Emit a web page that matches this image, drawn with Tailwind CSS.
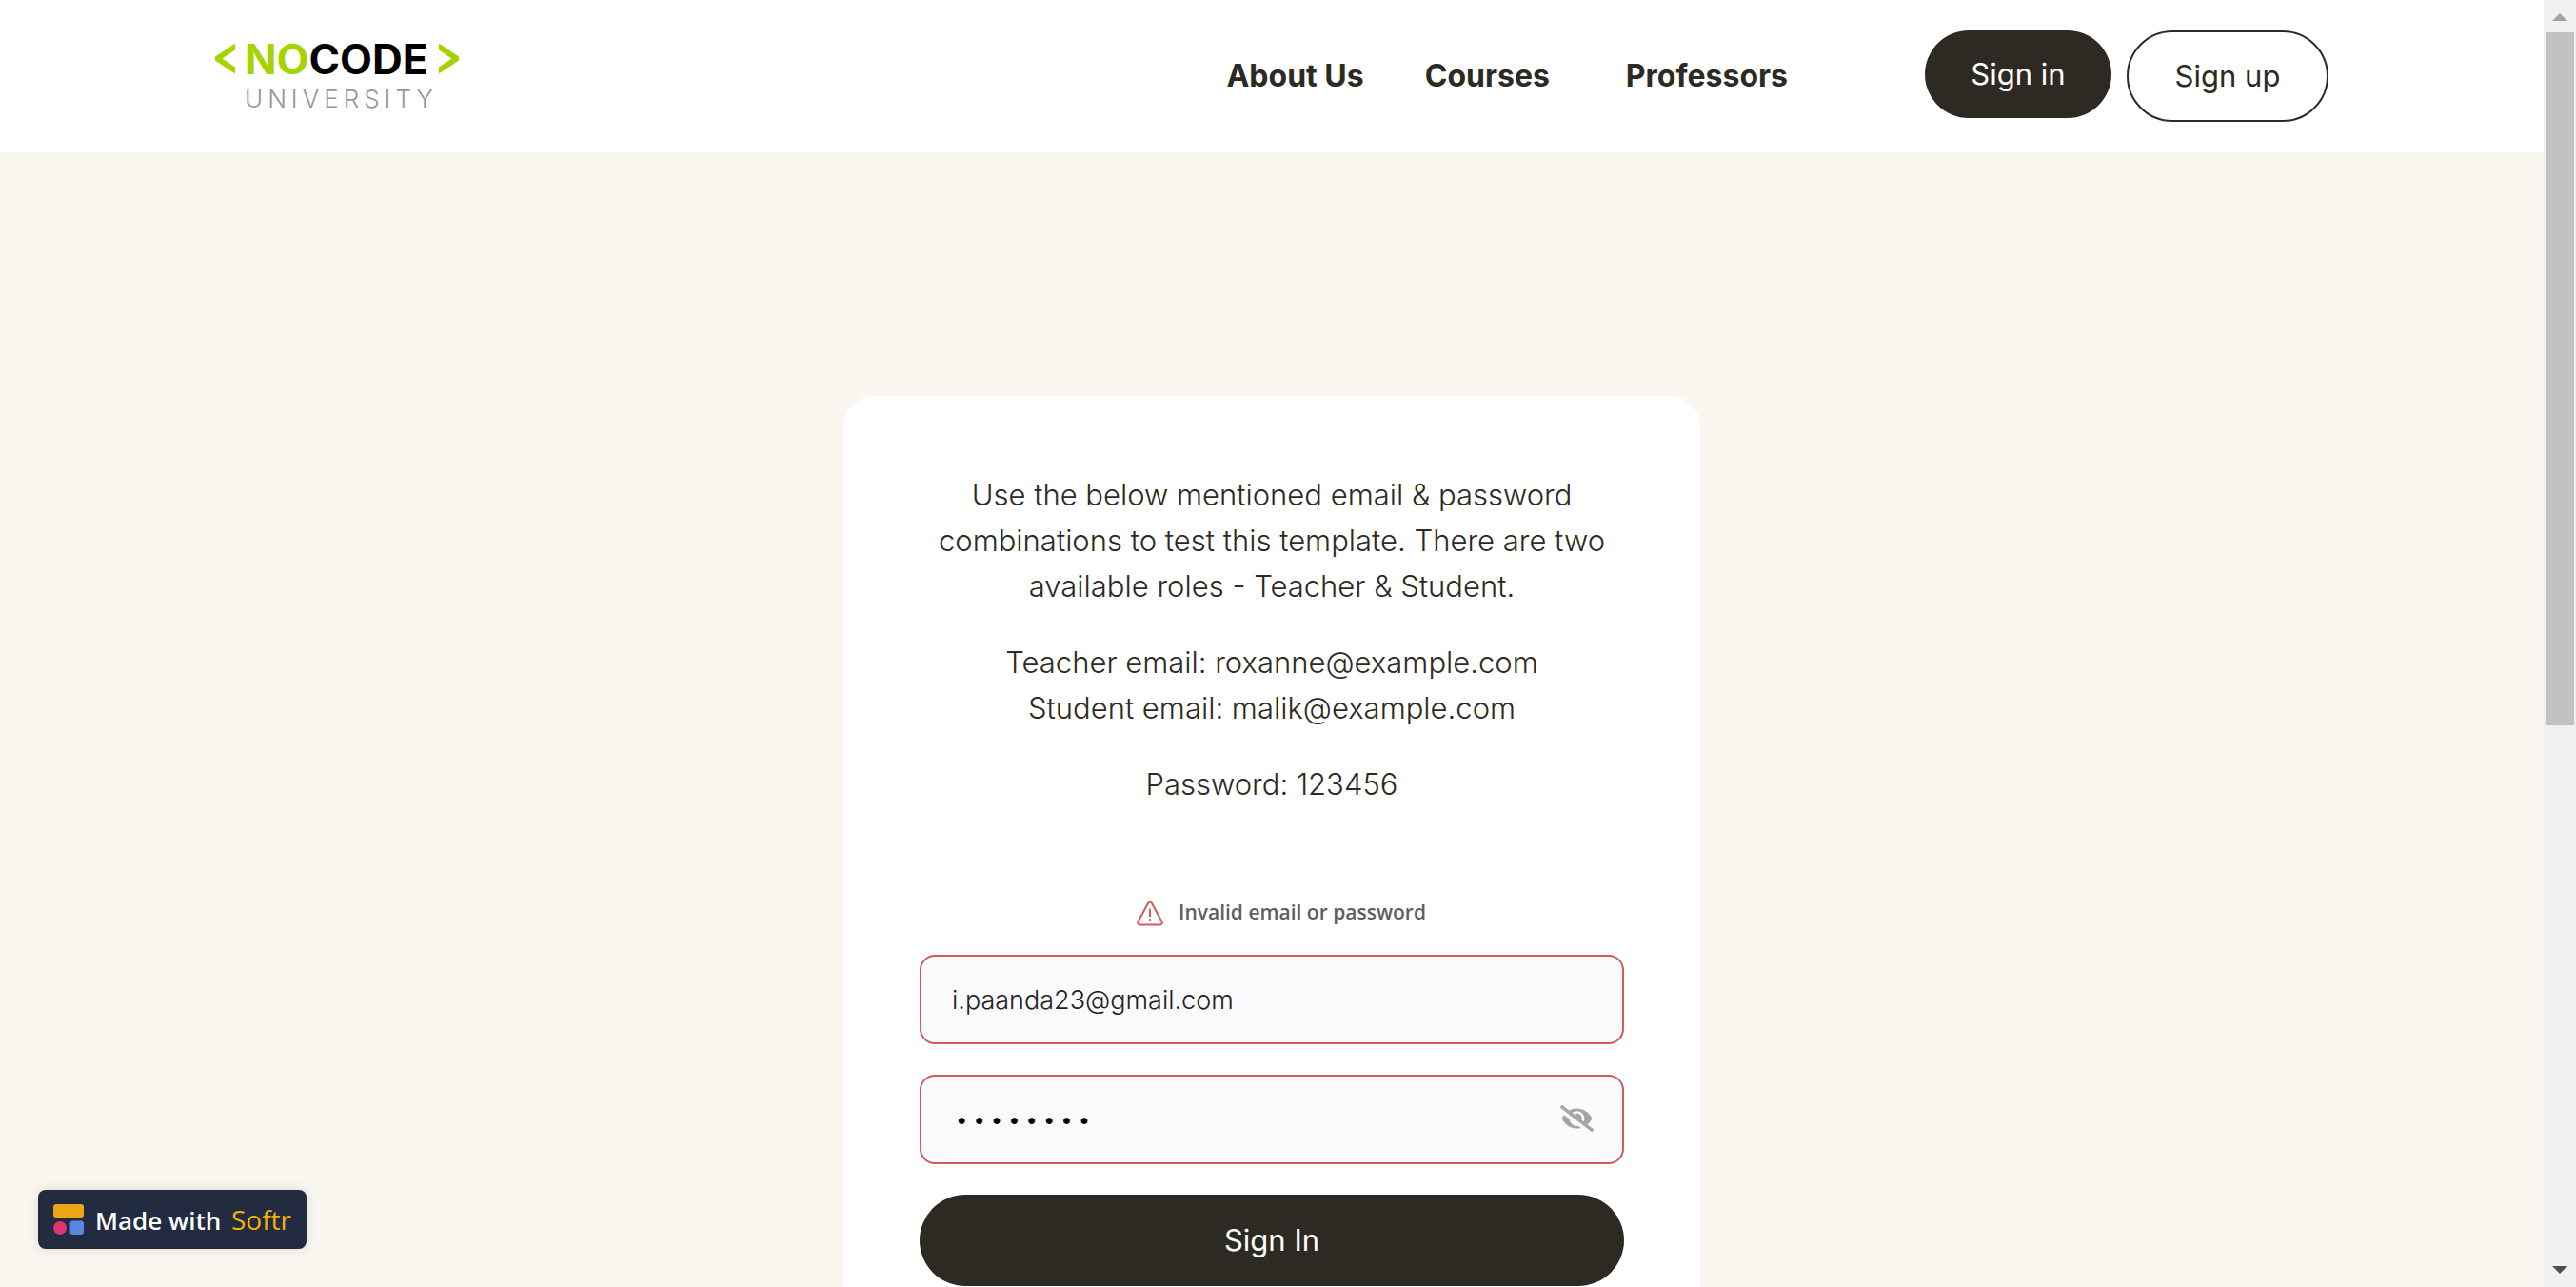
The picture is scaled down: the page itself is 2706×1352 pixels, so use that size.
<!DOCTYPE html>
<html lang="en">
<head>
<meta charset="utf-8">
<meta name="viewport" content="width=device-width, initial-scale=1">
<title>Sign in - NoCode University</title>
<script src="https://cdn.jsdelivr.net/npm/@tailwindcss/browser@4"></script>
</head>
<body class="flex h-screen overflow-hidden bg-[#f9f6ef] font-['Inter',sans-serif] text-[#2d2a23]">
  <div class="relative min-w-0 flex-1 overflow-hidden">
    <header class="bg-white">
      <div class="mx-auto flex h-40 max-w-[2220px] items-center justify-between">
        <a href="#" class="flex items-start" aria-label="NoCode University">
          <svg class="mt-1 h-9 w-[22px] fill-[#a5d300]" viewBox="0 0 22 36" aria-hidden="true"><path d="M21 1.5 0 15.5v4l21 14v-7L7.5 17.5 21 8.5z"/></svg>
          <span class="mx-2 flex w-[196px] flex-col gap-1 pl-px">
            <span class="text-[44px] leading-11 font-bold text-black"><span class="text-[#a5d300]">NO</span>CODE</span>
            <span class="text-[26px] leading-8 font-light tracking-[5px] text-[#98968f]">UNIVERSITY</span>
          </span>
          <svg class="mt-1 h-9 w-[22px] fill-[#a5d300]" viewBox="0 0 22 36" aria-hidden="true"><path d="M1 1.5 22 15.5v4L1 33.5v-7l13.5-9L1 8.5z"/></svg>
        </a>
        <div class="flex items-center">
          <nav class="mr-36 flex items-center text-[32px] leading-12 font-bold">
            <a href="#" class="mr-16">About Us</a>
            <a href="#" class="mr-20">Courses</a>
            <a href="#">Professors</a>
          </nav>
          <div class="flex items-start gap-4 text-[31px] leading-12">
            <button type="button" class="h-[92px] w-49 rounded-full bg-[#2d2a23] text-white">Sign in</button>
            <button type="button" class="h-24 w-53 rounded-full border-2 border-[#2d2a23] bg-white">Sign up</button>
          </div>
        </div>
      </div>
    </header>

    <main class="px-8 pt-64 pb-64">
      <section class="mx-auto max-w-[900px] rounded-[32px] bg-white p-20">
        <div class="flex flex-col gap-8 text-center text-[31px] leading-12 font-light">
          <p>Use the below mentioned email &amp; password<br>combinations to test this template. There are two<br>available roles - Teacher &amp; Student.</p>
          <p>Teacher email: roxanne@example.com<br>Student email: malik@example.com</p>
          <p>Password: 123456</p>
        </div>
        <form class="mt-23 flex flex-col">
          <p class="flex items-center justify-center gap-4 pl-5 font-['Open_Sans',sans-serif] text-[21px] leading-9 font-semibold text-[#5e5e62]" role="alert">
            <svg class="mt-1 h-7 w-7" viewBox="0 0 28 28" fill="none" stroke="#d05c5e" stroke-width="2" stroke-linecap="round" stroke-linejoin="round" aria-hidden="true"><path d="M12.2 2.6 1.4 22.6a2 2 0 0 0 1.8 2.9h21.6a2 2 0 0 0 1.8-2.9L15.8 2.6a2 2 0 0 0-3.6 0z"/><path d="M14 9.5v7M14 20v.3"/></svg>
            Invalid email or password
          </p>
          <input type="email" aria-label="Email" value="i.paanda23@gmail.com" class="mt-[27px] h-[94px] w-full rounded-2xl border-2 border-[#d05c5e] bg-[#fafafd] px-8 text-[27px] font-light text-[#212121]">
          <div class="relative mt-8">
            <input type="password" aria-label="Password" value="password" class="h-[94px] w-full rounded-2xl border-2 border-[#d05c5e] bg-[#fafafd] px-9 text-[22px] tracking-[6px] text-black">
            <button type="button" aria-label="Show password" class="absolute top-8 right-8">
              <svg class="h-[28px] w-[35px] fill-[#a5a5a5]" viewBox="0 0 640 512" aria-hidden="true"><path d="M320 400c-75.85 0-137.25-58.71-142.9-133.11L72.2 185.82c-13.79 17.3-26.48 35.59-36.72 55.59a32.35 32.35 0 0 0 0 29.19C89.71 376.41 197.07 448 320 448c26.91 0 52.87-4 77.89-10.46L346 397.39a144.13 144.13 0 0 1-26 2.61zm313.82 58.1l-110.55-85.44a331.25 331.25 0 0 0 81.25-102.07 32.35 32.35 0 0 0 0-29.19C550.29 135.59 442.93 64 320 64a308.15 308.15 0 0 0-147.32 37.7L45.46 3.37A16 16 0 0 0 23 6.18L3.37 31.45A16 16 0 0 0 6.18 53.9l588.36 454.73a16 16 0 0 0 22.46-2.81l19.64-25.27a16 16 0 0 0-2.82-22.45zm-183.72-142l-39.3-30.38A94.75 94.75 0 0 0 416 256a94.76 94.76 0 0 0-121.31-92.21A47.65 47.65 0 0 1 304 192a46.64 46.64 0 0 1-1.54 10l-73.61-56.89A142.31 142.31 0 0 1 320 112a143.92 143.92 0 0 1 144 144c0 21.63-5.29 41.79-13.9 60.11z"/></svg>
            </button>
          </div>
          <button type="submit" class="mt-8 h-24 w-full rounded-full bg-[#2d2a23] text-[31px] leading-12 text-white">Sign In</button>
        </form>
      </section>
    </main>

    <a href="#" class="absolute bottom-10 left-10 flex h-[62px] items-center rounded-lg bg-[#232b40] px-4 font-['Open_Sans',sans-serif] text-[26px] leading-9 font-semibold text-white shadow-[0_0_12px_rgba(0,0,0,0.12)]">
      <svg class="mr-3 h-8 w-8" viewBox="0 0 32 32" aria-hidden="true"><rect width="32" height="14" rx="3" fill="#eca514"/><circle cx="7" cy="25" r="7" fill="#db366d"/><rect x="17.5" y="17.5" width="14.5" height="14.5" rx="3" fill="#5886e0"/></svg>
      <span>Made with <span class="ml-1 text-[28px] font-medium text-[#f3b100]">Softr</span></span>
    </a>
  </div>

  <div class="flex w-[34px] shrink-0 flex-col items-center bg-[#f0f0f0]" aria-hidden="true">
    <svg class="h-[34px] w-4 shrink-0" viewBox="0 0 16 34"><path d="M8 14 16 22H0z" fill="#a3a3a3"/></svg>
    <div class="w-[30px] flex-[728] bg-[#c1c1c1]"></div>
    <div class="flex-[556]"></div>
    <svg class="h-[34px] w-4 shrink-0" viewBox="0 0 16 34"><path d="M0 12h16l-8 8z" fill="#505050"/></svg>
  </div>
</body>
</html>
